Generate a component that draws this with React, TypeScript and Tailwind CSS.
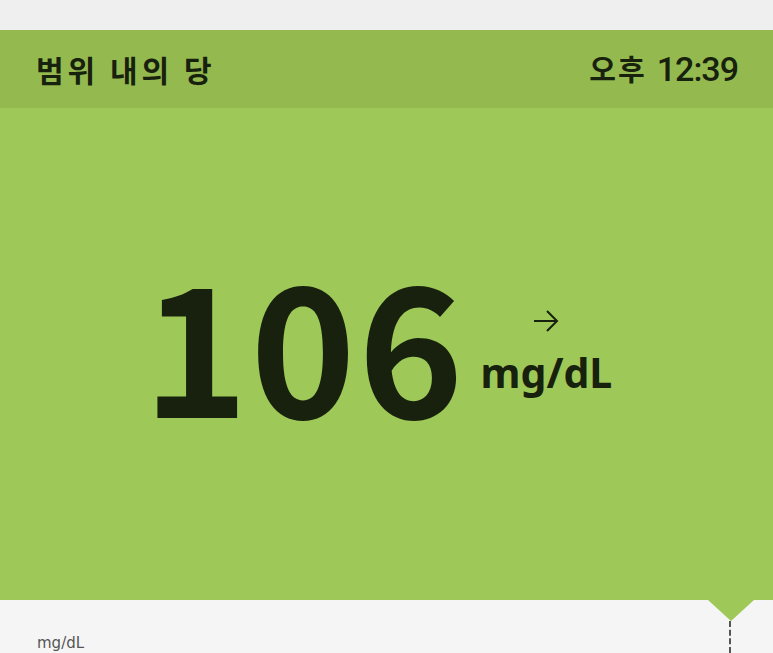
export default function App() {
  return (
    <div className="w-[773px] h-[653px] overflow-hidden flex flex-col bg-[#f5f5f5] font-['Noto_Sans','Noto_Sans_CJK_KR',sans-serif]">
      {/* status strip */}
      <div className="h-[30px] bg-[#efefef] shrink-0" />

      {/* header */}
      <div className="h-[78px] shrink-0 bg-[#94ba4f] flex items-center justify-between pl-[36px] pr-[35px] text-[#17210d]">
        <span className="text-[30px] font-bold font-['Noto_Sans_CJK_KR',sans-serif] tracking-[4px]">범위 내의 당</span>
        <span className="flex items-center gap-[10px]">
          <span className="text-[29px] font-bold font-['Noto_Sans_CJK_KR',sans-serif] tracking-[2px]">오후</span>
          <span className="text-[34px] font-medium font-['Roboto',sans-serif] tracking-[-1px]">12:39</span>
        </span>
      </div>

      {/* reading */}
      <div className="h-[492px] shrink-0 bg-[#9ec958] flex items-center justify-center gap-[15px] pb-[28px] pr-[18px] text-[#17210d]">
        <span className="text-[179px] leading-none font-bold font-['Noto_Sans_CJK_KR',sans-serif] tracking-[2px]">106</span>
        <div className="flex flex-col items-center gap-[20px] mt-[23px]">
          <svg width="26" height="22" viewBox="0 0 26 22" fill="none" stroke="#17210d" strokeWidth="2">
            <path d="M1 11h23M14 1l10 10-10 10" />
          </svg>
          <span className="text-[41px] leading-none font-bold">mg/dL</span>
        </div>
      </div>

      {/* chart area */}
      <div className="relative flex-1 bg-[#f5f5f5]">
        <div className="absolute left-[708px] top-0 w-0 h-0 border-l-[23px] border-r-[23px] border-t-[21px] border-l-transparent border-r-transparent border-t-[#9ec958]" />
        <div className="absolute left-[729px] top-[21px] bottom-0 border-l-2 border-dashed border-[#555]" />
        <span className="absolute left-[37px] top-[36px] text-[15px] leading-none text-[#555] font-['DejaVu_Sans',sans-serif]">mg/dL</span>
      </div>
    </div>
  );
}
